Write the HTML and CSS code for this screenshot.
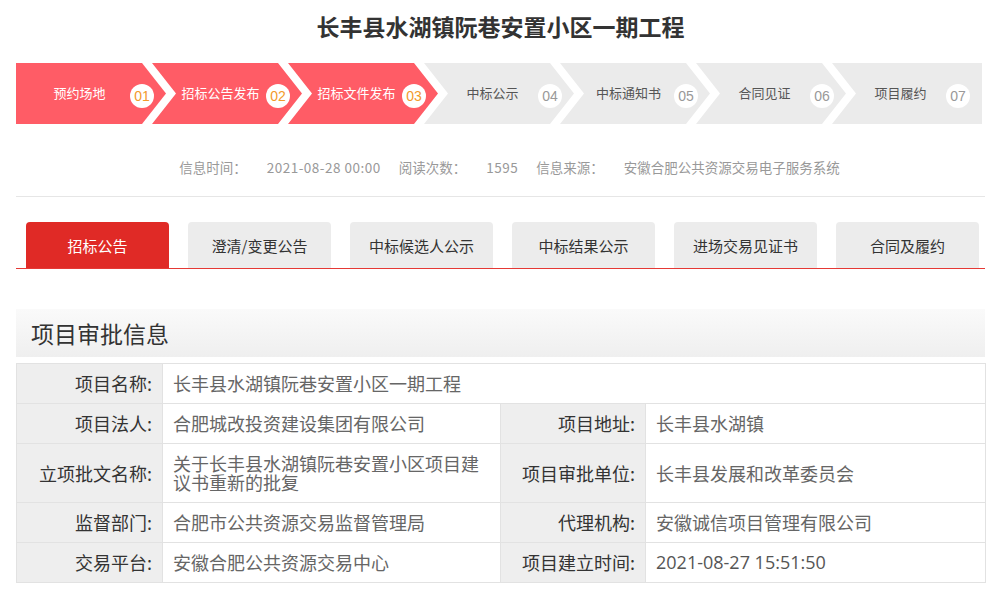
FILE: index.html
```html
<!DOCTYPE html>
<html lang="zh-CN">
<head>
<meta charset="utf-8">
<title>长丰县水湖镇阮巷安置小区一期工程</title>
<link rel="stylesheet" href="styles.css">
</head>
<body>
<div class="page">
  <h1 class="title">长丰县水湖镇阮巷安置小区一期工程</h1>

  <div class="steps">
    <div class="step step-first done"><span class="step-text">预约场地</span><span class="step-num">01</span></div>
    <div class="step done"><span class="step-text">招标公告发布</span><span class="step-num">02</span></div>
    <div class="step done"><span class="step-text">招标文件发布</span><span class="step-num">03</span></div>
    <div class="step"><span class="step-text">中标公示</span><span class="step-num">04</span></div>
    <div class="step"><span class="step-text">中标通知书</span><span class="step-num">05</span></div>
    <div class="step"><span class="step-text">合同见证</span><span class="step-num">06</span></div>
    <div class="step step-last"><span class="step-text">项目履约</span><span class="step-num">07</span></div>
  </div>

  <div class="meta">
    <span class="meta-label">信息时间：</span><span class="meta-value meta-num">2021-08-28 00:00</span>
    <span class="meta-label">阅读次数：</span><span class="meta-value meta-num">1595</span>
    <span class="meta-label">信息来源：</span><span class="meta-value">安徽合肥公共资源交易电子服务系统</span>
  </div>

  <div class="tabs">
    <div class="tab active">招标公告</div>
    <div class="tab">澄清/变更公告</div>
    <div class="tab">中标候选人公示</div>
    <div class="tab">中标结果公示</div>
    <div class="tab">进场交易见证书</div>
    <div class="tab">合同及履约</div>
  </div>

  <div class="section-head">项目审批信息</div>

  <table class="info">
    <colgroup>
      <col class="c-label"><col class="c-value"><col class="c-label2"><col class="c-value2">
    </colgroup>
    <tr>
      <th>项目名称:</th>
      <td colspan="3">长丰县水湖镇阮巷安置小区一期工程</td>
    </tr>
    <tr>
      <th>项目法人:</th>
      <td>合肥城改投资建设集团有限公司</td>
      <th>项目地址:</th>
      <td>长丰县水湖镇</td>
    </tr>
    <tr class="tall">
      <th>立项批文名称:</th>
      <td>关于长丰县水湖镇阮巷安置小区项目建议书重新的批复</td>
      <th>项目审批单位:</th>
      <td>长丰县发展和改革委员会</td>
    </tr>
    <tr>
      <th>监督部门:</th>
      <td>合肥市公共资源交易监督管理局</td>
      <th>代理机构:</th>
      <td>安徽诚信项目管理有限公司</td>
    </tr>
    <tr>
      <th>交易平台:</th>
      <td>安徽合肥公共资源交易中心</td>
      <th>项目建立时间:</th>
      <td class="num">2021-08-27 15:51:50</td>
    </tr>
  </table>
</div>
</body>
</html>
```

FILE: styles.css
```css
* { box-sizing: border-box; }

body {
  margin: 0;
  background: #fff;
  font-family: "Microsoft YaHei", "Noto Sans CJK SC", "Liberation Sans", sans-serif;
  color: #333;
}

.page {
  width: 969px;
  margin-left: 16px;
}

.title {
  margin: 0;
  padding-top: 10px;
  height: 63px;
  line-height: 32px;
  font-size: 23px;
  font-weight: bold;
  text-align: center;
  color: #333;
}

/* steps */
.steps {
  display: flex;
  height: 61px;
}

.step {
  flex: 0 0 150px;
  width: 150px;
  margin-right: -14px;
  background: #ebebeb;
  display: flex;
  align-items: center;
  padding-left: 24px;
  clip-path: polygon(0 0, 126px 0, 150px 50%, 126px 100%, 0 100%, 24px 50%);
}

.step-first {
  padding-left: 14px;
  clip-path: polygon(0 0, 126px 0, 150px 50%, 126px 100%, 0 100%);
}

.step-last {
  margin-right: 0;
  clip-path: polygon(0 0, 100% 0, 100% 100%, 0 100%, 24px 50%);
}

.step.done {
  background: #ff5c66;
}

.step-text {
  flex: 1;
  text-align: center;
  font-size: 13px;
  color: #555;
  white-space: nowrap;
  padding-bottom: 3px;
}

.step.done .step-text {
  color: #fff;
}

.step-num {
  flex: 0 0 24px;
  width: 24px;
  height: 24px;
  margin-left: 1px;
  margin-right: 12px;
  margin-top: 4px;
  border-radius: 50%;
  background: #fff;
  color: #999;
  font-family: "Liberation Sans", Arial, sans-serif;
  font-size: 14px;
  line-height: 24px;
  text-align: center;
}

.step.done .step-num {
  color: #f39a2b;
}

/* meta */
.meta {
  display: flex;
  justify-content: center;
  padding-left: 18px;
  height: 73px;
  line-height: 86px;
  font-size: 13.5px;
  color: #999;
  border-bottom: 1px solid #e6e6e6;
}

.meta-label {
  margin-right: 20px;
}

.meta-value {
  margin-right: 18px;
  color: #999;
}

.meta-num {
  letter-spacing: 0.5px;
}

.meta-value:last-child {
  margin-right: 0;
}

/* tabs */
.tabs {
  display: flex;
  gap: 19px;
  margin-top: 25px;
  padding-left: 10px;
  border-bottom: 1px solid #e53935;
}

.tab {
  width: 143px;
  height: 46px;
  line-height: 48px;
  text-align: center;
  font-size: 15px;
  color: #333;
  background: #ececec;
  border-radius: 4px 4px 0 0;
}

.tab.active {
  background: #e02a26;
  color: #fff;
}

/* section head */
.section-head {
  margin-top: 40px;
  height: 48px;
  line-height: 48px;
  padding-left: 15px;
  font-size: 23px;
  color: #333;
  background: linear-gradient(#fafafa, #efefef);
}

/* table */
.info {
  margin-top: 6px;
  width: 969px;
  border-collapse: collapse;
  table-layout: fixed;
  font-size: 18px;
}

.c-label { width: 146px; }
.c-value { width: 338px; }
.c-label2 { width: 145px; }
.c-value2 { width: 340px; }

.info th,
.info td {
  border: 1px solid #e2e2e2;
  height: 40px;
  padding: 0 10px;
  line-height: 19px;
  vertical-align: middle;
}

.info th {
  background: #eeeeee;
  font-weight: normal;
  text-align: right;
  color: #333;
  white-space: nowrap;
}

.info td {
  background: #fff;
  color: #666;
  text-align: left;
}

.info td.num {
  font-family: "Open Sans", "Noto Sans", sans-serif;
  color: #555;
}

.info tr.tall th,
.info tr.tall td {
  height: 59px;
}
```
